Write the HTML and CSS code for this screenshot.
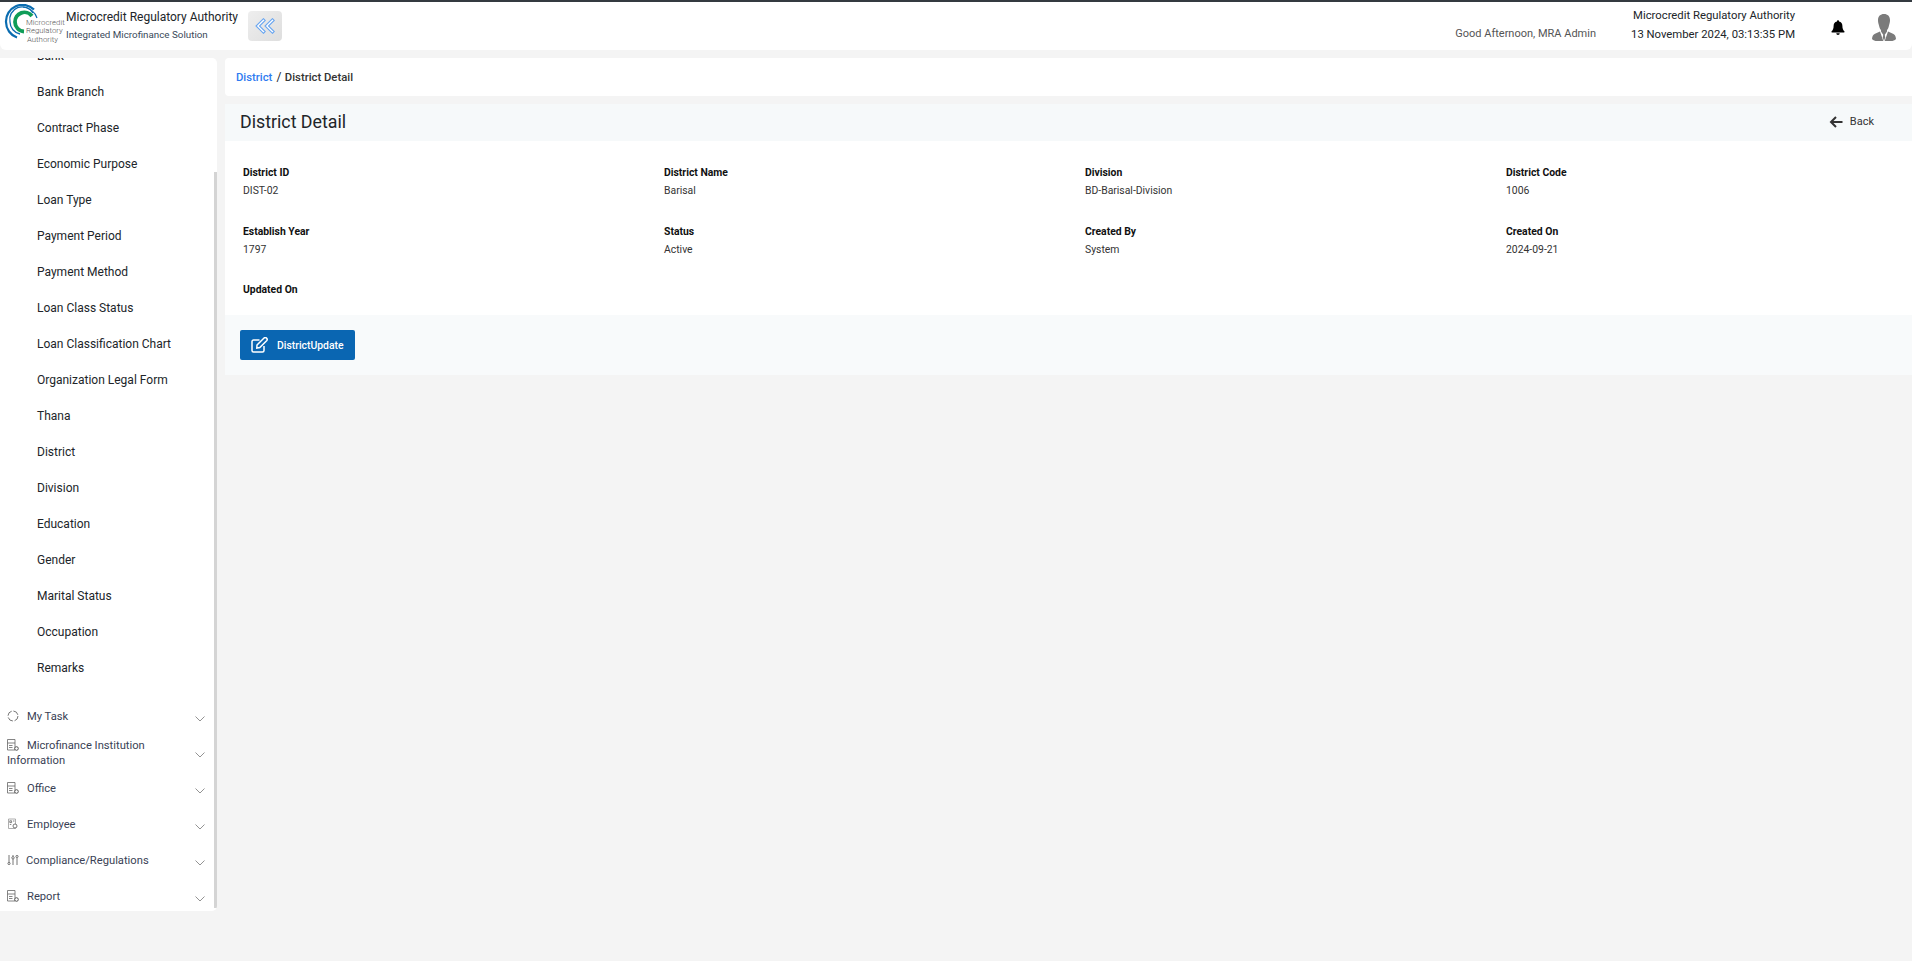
FILE: index.html
```html
<!DOCTYPE html>
<html lang="en">
<head>
<meta charset="utf-8">
<title>District Detail</title>
<link rel="stylesheet" href="styles.css">
</head>
<body>
<header class="topbar">
  <div class="brand">
    <svg class="logo" viewBox="0 0 66 44" width="66" height="44" aria-hidden="true">
      <path d="M34 5.500A16.500 16.500 0 0 0 6 18a16.500 16.500 0 0 0 11 15.500" fill="none" stroke="#0a6cb0" stroke-width="2.200"/>
      <path d="M37 14A16 16 0 0 0 23 3" fill="none" stroke="#0a6cb0" stroke-width="1.200"/>
      <path d="M33 9A12.500 12.500 0 0 0 10 18a12.500 12.500 0 0 0 10 12" fill="none" stroke="#0a6cb0" stroke-width="1.300"/>
      <path d="M32 12A9.500 9.500 0 0 0 15 18a9.500 9.500 0 0 0 9 9.500" fill="none" stroke="#0f9d58" stroke-width="3.800"/>
      <text class="logo-t" x="26" y="20.500">Microcredit</text>
      <text class="logo-t" x="26" y="29">Regulatory</text>
      <text class="logo-t" x="27" y="37.500">Authority</text>
    </svg>
    <div class="brand-text">
      <div class="brand-name">Microcredit Regulatory Authority</div>
      <div class="brand-sub">Integrated Microfinance Solution</div>
    </div>
    <button class="collapse" type="button" aria-label="Collapse">
      <svg viewBox="0 0 20 16" width="20" height="16" aria-hidden="true"><path d="M8.500.7 1 8l7.500 7.300 1.700-1.700L4.500 8l5.700-5.600zM17.500.7 10 8l7.500 7.300 1.700-1.700L13.500 8l5.700-5.600z" fill="#fff" stroke="#6aa6f0" stroke-width="1.100"/></svg>
    </button>
  </div>
  <div class="top-right">
    <div class="greeting">Good Afternoon, MRA Admin</div>
    <div class="org">
      <div>Microcredit Regulatory Authority</div>
      <div>13 November 2024, 03:13:35 PM</div>
    </div>
    <svg class="bell" viewBox="0 0 16 18" width="14" height="16" aria-hidden="true"><path d="M8 0a1.300 1.300 0 0 0-1.200 1.500C4.300 2 3 4 3 6.500c0 3.500-1 5-2.400 6.500-.4.500-.1 1 .5 1h13.800c.6 0 .9-.5.5-1C14 11.500 13 10 13 6.500c0-2.500-1.300-4.500-3.800-5A1.300 1.300 0 0 0 8 0zM6 15a2 2 0 0 0 4 0z" fill="#000"/></svg>
    <svg class="avatar" viewBox="0 0 24 27" width="24" height="27" aria-hidden="true"><path d="M12 0c3.600 0 6 2.300 6 6 0 2-.4 3.500-1 5.500-.5 2-1 3.500-2 4.500v1.500L12 22l-3-4.500V16c-1-1-1.500-2.500-2-4.500C6.400 9.500 6 8 6 6c0-3.700 2.400-6 6-6z" fill="#7b7b7b"/><path d="M8 17.500 11.300 27H5c-2 0-3.700-.5-5-2 .2-3 1.300-4.500 3-5.200zM16 17.500 12.700 27H19c2 0 3.700-.5 5-2-.2-3-1.300-4.500-3-5.200z" fill="#7b7b7b"/><path d="M11.200 21h1.600l.4 2.500-1.200 3.500-1.200-3.500z" fill="#7b7b7b"/></svg>
  </div>
</header>

<div class="layout">
  <nav class="sidebar">
    <ul class="submenu">
      <li>Bank</li><li>Bank Branch</li><li>Contract Phase</li><li>Economic Purpose</li><li>Loan Type</li><li>Payment Period</li><li>Payment Method</li><li>Loan Class Status</li><li>Loan Classification Chart</li><li>Organization Legal Form</li><li>Thana</li><li>District</li><li>Division</li><li>Education</li><li>Gender</li><li>Marital Status</li><li>Occupation</li><li>Remarks</li>
    </ul>
    <ul class="mainmenu">
      <li><span class="label"><svg class="mi" viewBox="0 0 12 12" aria-hidden="true"><circle cx="6" cy="6" r="5" fill="none" stroke="#777" stroke-width="1" stroke-dasharray="6 1.800"/></svg>My Task</span><svg class="chev" viewBox="0 0 10 6" aria-hidden="true"><path d="M.5.5 5 5 9.500.5" fill="none" stroke="#777" stroke-width=".8"/></svg></li>
      <li class="two"><span class="label"><svg class="mi" viewBox="0 0 12 12" aria-hidden="true"><path d="M.5.500h7.500v10.500H.5zM.5 4h7.500M2 6.500h3.500M2 8.500h3.500" fill="none" stroke="#666" stroke-width=".8"/><circle cx="9.500" cy="9.500" r="1.800" fill="#fff" stroke="#555" stroke-width="1"/></svg>Microfinance Institution Information</span><svg class="chev" viewBox="0 0 10 6" aria-hidden="true"><path d="M.5.5 5 5 9.500.5" fill="none" stroke="#777" stroke-width=".8"/></svg></li>
      <li><span class="label"><svg class="mi" viewBox="0 0 12 12" aria-hidden="true"><path d="M.5.500h7.500v10.500H.5zM.5 4h7.500M2 6.500h3.500M2 8.500h3.500" fill="none" stroke="#666" stroke-width=".8"/><circle cx="9.500" cy="9.500" r="1.800" fill="#fff" stroke="#555" stroke-width="1"/></svg>Office</span><svg class="chev" viewBox="0 0 10 6" aria-hidden="true"><path d="M.5.5 5 5 9.500.5" fill="none" stroke="#777" stroke-width=".8"/></svg></li>
      <li><span class="label"><svg class="mi" viewBox="0 0 12 12" aria-hidden="true"><path d="M1.500 1h7v9.500h-7z" fill="none" stroke="#999" stroke-width=".8"/><path d="M2.800 2.800h1.800v1.800H2.800zM6 3h1.500M2.800 6.500h1.500" fill="none" stroke="#666" stroke-width=".8"/><circle cx="8" cy="8" r="2" fill="#fff" stroke="#666" stroke-width=".9"/></svg>Employee</span><svg class="chev" viewBox="0 0 10 6" aria-hidden="true"><path d="M.5.5 5 5 9.500.5" fill="none" stroke="#777" stroke-width=".8"/></svg></li>
      <li><span class="label label-tight"><svg class="mi" viewBox="0 0 12 12" aria-hidden="true"><path d="M2 1v7.500M6 5v6M6 1v1.500M10 4v7" fill="none" stroke="#666" stroke-width=".9"/><circle cx="2" cy="9.500" r="1.100" fill="none" stroke="#555" stroke-width=".8"/><circle cx="6" cy="3.800" r="1.200" fill="none" stroke="#555" stroke-width=".8"/><circle cx="10" cy="2.500" r="1.100" fill="none" stroke="#555" stroke-width=".8"/></svg>Compliance/Regulations</span><svg class="chev" viewBox="0 0 10 6" aria-hidden="true"><path d="M.5.5 5 5 9.500.5" fill="none" stroke="#777" stroke-width=".8"/></svg></li>
      <li><span class="label"><svg class="mi" viewBox="0 0 12 12" aria-hidden="true"><path d="M.5.500h7.500v10.500H.5zM.5 4h7.500M2 6.500h3.500M2 8.500h3.500" fill="none" stroke="#666" stroke-width=".8"/><circle cx="9.500" cy="9.500" r="1.800" fill="#fff" stroke="#555" stroke-width="1"/></svg>Report</span><svg class="chev" viewBox="0 0 10 6" aria-hidden="true"><path d="M.5.5 5 5 9.500.5" fill="none" stroke="#777" stroke-width=".8"/></svg></li>
    </ul>
    <div class="scroll-thumb"></div>
  </nav>

  <main class="content">
    <div class="crumbs"><a class="crumb-link">District</a><span class="crumb-sep">/</span><span class="crumb-cur">District Detail</span></div>
    <section class="card">
      <div class="card-head">
        <h1>District Detail</h1>
        <a class="back"><svg viewBox="0 0 14 12" width="14" height="12" aria-hidden="true"><path d="M13.500 6H2.500M7 1 2 6l5 5" fill="none" stroke="#333" stroke-width="2"/></svg>Back</a>
      </div>
      <div class="details">
        <div class="field"><b>District ID</b><span>DIST-02</span></div>
        <div class="field"><b>District Name</b><span>Barisal</span></div>
        <div class="field"><b>Division</b><span>BD-Barisal-Division</span></div>
        <div class="field"><b>District Code</b><span>1006</span></div>
        <div class="field"><b>Establish Year</b><span>1797</span></div>
        <div class="field"><b>Status</b><span>Active</span></div>
        <div class="field"><b>Created By</b><span>System</span></div>
        <div class="field"><b>Created On</b><span>2024-09-21</span></div>
        <div class="field"><b>Updated On</b><span></span></div>
      </div>
      <div class="card-foot">
        <button class="btn" type="button"><svg viewBox="0 0 17 16" width="17" height="16" aria-hidden="true"><path d="M13 9v4.500a1.500 1.500 0 0 1-1.500 1.500h-9A1.500 1.500 0 0 1 1 13.500v-9A1.500 1.500 0 0 1 2.500 3h6" fill="none" stroke="#fff" stroke-width="1.500"/><path d="M6 8 12.800 1.200a1.400 1.400 0 0 1 2.800 2.600L8.800 10.500l-3 .5z" fill="none" stroke="#fff" stroke-width="1.500"/></svg>DistrictUpdate</button>
      </div>
    </section>
  </main>
</div>
</body>
</html>
```
FILE: styles.css
```css
* { box-sizing: border-box; }
html, body { margin: 0; height: 100%; }
body { background: #f4f4f4; font-family: Roboto, "Liberation Sans", sans-serif; color: #212529; overflow: hidden; }
ul { list-style: none; margin: 0; padding: 0; }

.topbar { height: 50px; background: #fff; border-top: 2px solid #343a40; display: flex; justify-content: space-between; border-radius: 0 0 6px 6px; }
.brand { display: flex; align-items: center; }
.logo { flex: none; }
.logo-t { font-size: 7.800px; fill: #555; font-family: Roboto, sans-serif; font-weight: 300; }
.brand-text { width: 182px; align-self: flex-start; padding-top: 5.500px; }
.brand-name { font-size: 12px; line-height: 18px; color: #212529; }
.brand-sub { font-size: 9.800px; line-height: 16px; margin-top: 1px; color: #3a4a5a; }
.collapse { width: 34px; height: 30px; border: 0; border-radius: 4px; background: linear-gradient(135deg, #eeeeee, #dedede); display: flex; align-items: center; justify-content: center; padding: 0; }

.top-right { display: flex; align-items: flex-start; }
.greeting { font-size: 11px; color: #555; margin-top: 24px; margin-right: 35px; line-height: 16px; }
.org { font-size: 11.300px; text-align: right; line-height: 19px; margin-top: 4px; }
.bell { margin: 17.500px 0 0 36px; }
.avatar { margin: 12px 16px 0 27px; }

.layout { display: flex; gap: 8px; padding-top: 8px; }

.sidebar { position: relative; width: 217px; height: 853px; background: #fff; border-radius: 0 5px 5px 0; overflow: hidden; }
.submenu { margin-top: -20px; font-size: 12px; color: #212529; }
.submenu li { height: 36px; line-height: 36px; padding-left: 37px; }
.mainmenu { margin-top: 12px; font-size: 11.200px; color: #3a3f55; }
.mainmenu li { height: 36px; display: flex; align-items: center; justify-content: space-between; padding: 0 12px 0 7px; }
.mainmenu .two .label { padding-top: 1px; }
.label { display: block; width: 160px; line-height: 15px; }
.mi { width: 12px; height: 12px; margin-right: 8px; vertical-align: -2px; }
.label-tight .mi { margin-right: 7px; }
.chev { width: 10px; height: 6px; margin-top: 5px; }
.scroll-thumb { position: absolute; right: 0; top: 114px; bottom: 3px; width: 3px; background: #d4d4d4; }

.content { flex: 1; min-width: 0; }
.crumbs { height: 38px; background: #fff; border-radius: 4px 0 0 4px; display: flex; align-items: center; padding-left: 11px; font-size: 11.300px; }
.crumb-link { color: #2f7bf0; font-weight: 500; }
.crumb-sep { margin: 0 3.500px 0 4px; font-size: 12px; }
.crumb-cur { font-weight: 500; color: #333; }

.card { margin-top: 8px; }
.card-head { height: 37px; background: #f6f9fa; display: flex; align-items: center; justify-content: space-between; padding: 0 38px 2px 15px; }
.card-head h1 { margin: 0; font-size: 17.800px; font-weight: 400; color: #212529; }
.back { display: flex; align-items: center; gap: 7px; font-size: 11px; color: #333; }

.details { background: #fff; padding: 23.400px 18px 0; height: 174px; display: grid; grid-template-columns: repeat(4, 421px); grid-auto-rows: 58.400px; }
.field { display: flex; flex-direction: column; font-size: 10.400px; line-height: 18px; }
.field b { font-weight: 700; color: #111; }
.field span { color: #333; }

.card-foot { background: #f8fafb; height: 60px; padding: 15px; }
.btn { height: 30px; width: 115px; background: #0a66b2; border: 0; border-radius: 2px; color: #fff; font: 500 10.400px Roboto, sans-serif; display: flex; align-items: center; gap: 9px; padding: 0 11px; }
```
